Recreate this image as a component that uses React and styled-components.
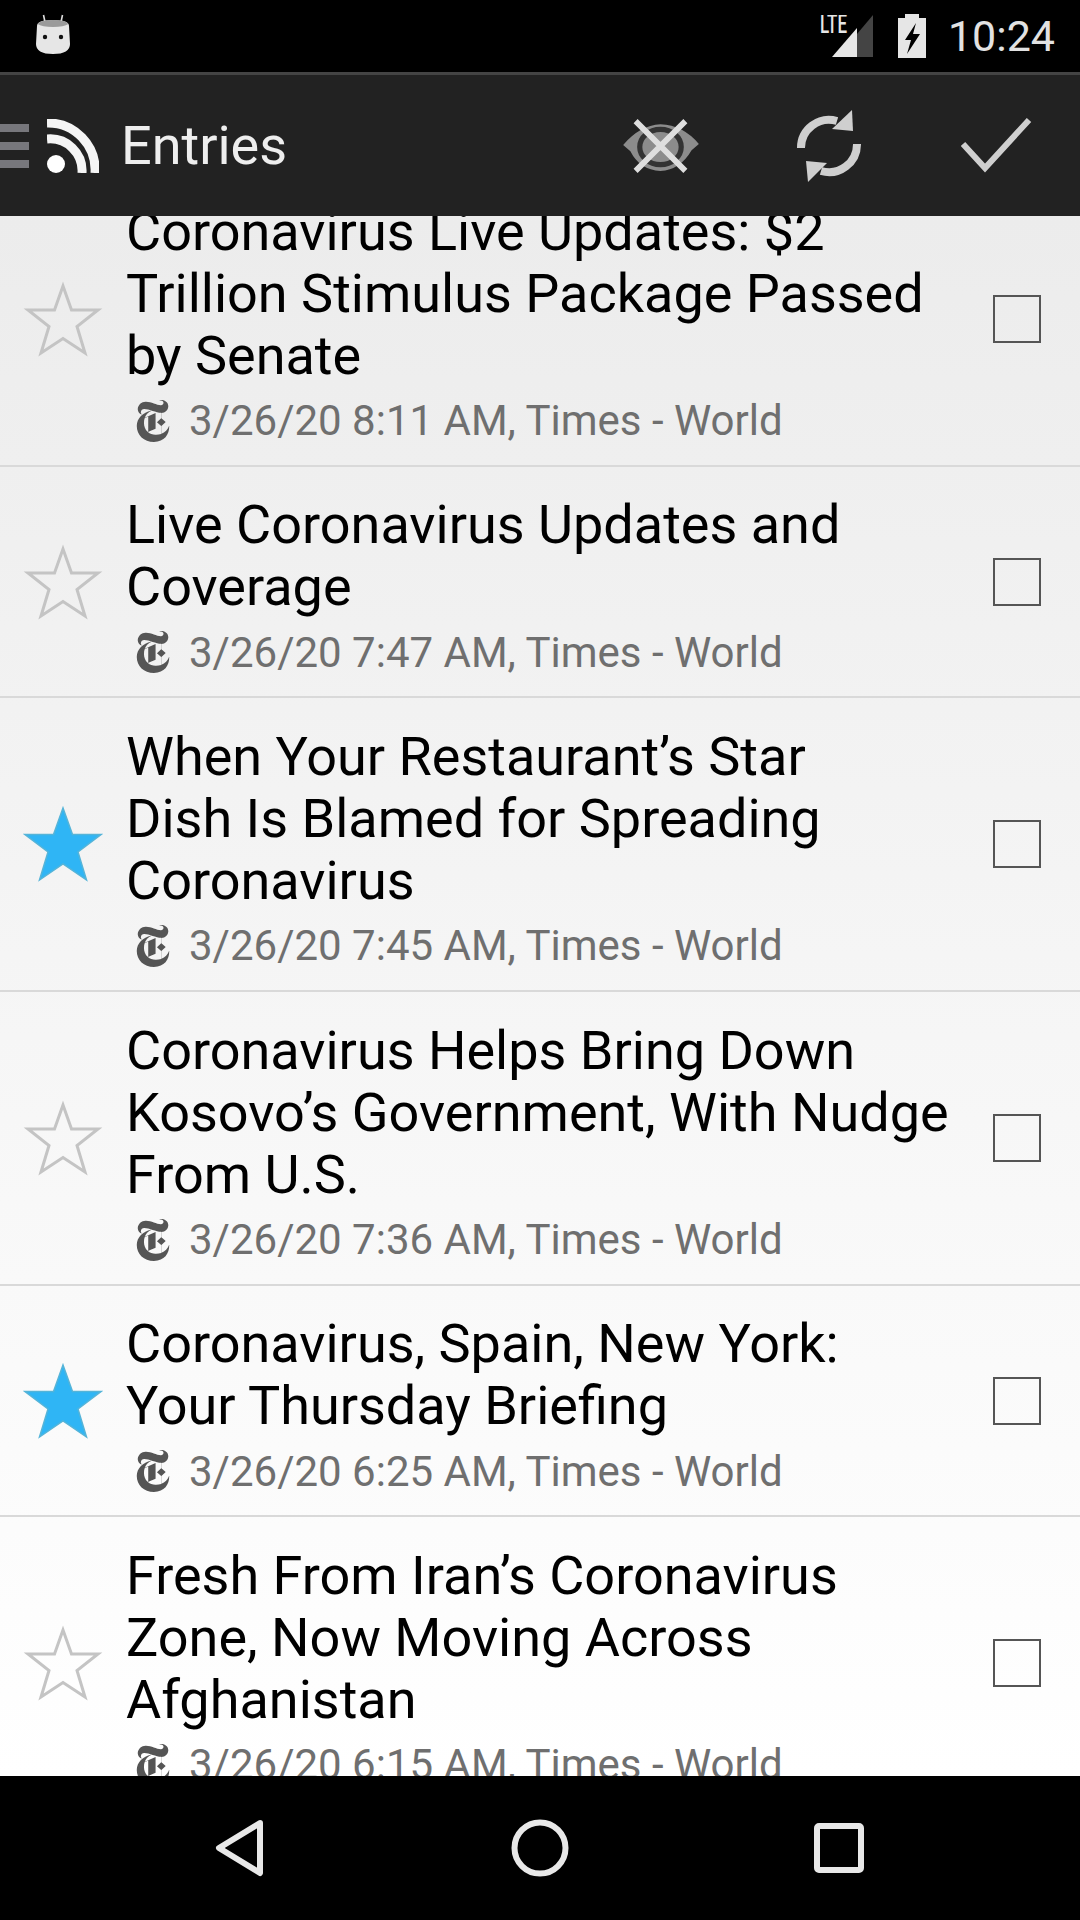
import { createGlobalStyle, styled } from "styled-components";
import { SiNewyorktimes } from "react-icons/si";

const GlobalStyle = createGlobalStyle`
	html, body {
		margin: 0;
		padding: 0;
		background: #000;
	}
`;

const Screen = styled.div`
	display: flex;
	flex-direction: column;
	width: 1080px;
	height: 1920px;
	overflow: hidden;
	font-family: "Roboto", "Liberation Sans", sans-serif;
`;

const StatusBar = styled.div`
	flex: 0 0 72px;
	display: flex;
	align-items: center;
	background: #000;
	padding: 0 25px 0 36px;
`;

const BotIcon = styled.svg`
	display: block;
	margin-bottom: 4px;
`;

const StatusRight = styled.div`
	margin-left: auto;
	display: flex;
	align-items: center;
`;

const BatteryIcon = styled.svg`
	display: block;
	margin-left: 24px;
`;

const Clock = styled.span`
	font-size: 43px;
	color: #e2e2e2;
	margin-left: 22px;
`;

const Toolbar = styled.div`
	flex: 0 0 144px;
	display: flex;
	align-items: center;
	background: #222;
	border-top: 3px solid #444;
	box-sizing: border-box;
`;

const Hamburger = styled.div`
	display: flex;
	flex-direction: column;
	gap: 10px;
	width: 29px;
	margin-right: 18px;
	i {
		display: block;
		height: 8px;
		background: #77777c;
	}
`;

const ToolbarTitle = styled.span`
	font-size: 54px;
	color: #eeeeee;
	margin-left: 22px;
`;

const ToolbarActions = styled.div`
	margin-left: auto;
	display: flex;
	align-items: center;
`;

const ActionIcon = styled.svg`
	display: block;
	margin-right: ${(p) => p.$gap}px;
	color: #cfcfcf;
`;

const List = styled.div`
	flex: 1;
	min-height: 0;
	overflow: hidden;
	background: linear-gradient(180deg, #ececec 0%, #ffffff 100%);
`;

const Rows = styled.div`
	margin-top: -43px;
`;

const Row = styled.div`
	display: flex;
	align-items: center;
	box-sizing: border-box;
	height: ${(p) => p.$height}px;
	border-bottom: 2px solid #d9d9d9;
`;

const StarBox = styled.div`
	flex: 0 0 126px;
	display: flex;
	justify-content: center;
`;

const Body = styled.div`
	flex: 1;
	min-width: 0;
	padding-top: 14px;
`;

const TitleLine = styled.div`
	font-size: 54px;
	line-height: 62px;
	color: #000;
	white-space: nowrap;
`;

const Meta = styled.div`
	display: flex;
	align-items: center;
	height: 62px;
	padding: 3px 0 0 6px;
	font-size: 42px;
	color: #6f6f6f;
	white-space: nowrap;
	svg {
		flex: none;
		margin-right: 15px;
		color: #555;
	}
`;

const CheckBox = styled.div`
	flex: none;
	box-sizing: border-box;
	width: 48px;
	height: 48px;
	margin: 0 39px 0 30px;
	border: 2px solid #555;
`;

const NavBar = styled.div`
	flex: 0 0 144px;
	display: flex;
	align-items: center;
	background: #000;
	padding-left: 215px;
`;

const NavIcon = styled.svg`
	display: block;
	flex: none;
	margin-left: ${(p) => p.$gap || 0}px;
`;

const entries = [
	{
		lines: [
			"Coronavirus Live Updates: $2",
			"Trillion Stimulus Package Passed",
			"by Senate",
		],
		meta: "3/26/20 8:11 AM, Times - World",
	},
	{
		lines: ["Live Coronavirus Updates and", "Coverage"],
		meta: "3/26/20 7:47 AM, Times - World",
	},
	{
		lines: [
			"When Your Restaurant’s Star",
			"Dish Is Blamed for Spreading",
			"Coronavirus",
		],
		meta: "3/26/20 7:45 AM, Times - World",
		starred: true,
	},
	{
		lines: [
			"Coronavirus Helps Bring Down",
			"Kosovo’s Government, With Nudge",
			"From U.S.",
		],
		meta: "3/26/20 7:36 AM, Times - World",
	},
	{
		lines: ["Coronavirus, Spain, New York:", "Your Thursday Briefing"],
		meta: "3/26/20 6:25 AM, Times - World",
		starred: true,
	},
	{
		lines: [
			"Fresh From Iran’s Coronavirus",
			"Zone, Now Moving Across",
			"Afghanistan",
		],
		meta: "3/26/20 6:15 AM, Times - World",
	},
];

function Star({ filled }) {
	return (
		<svg width="80" height="76" viewBox="0 0 80 76">
			{filled ? (
				<polygon
					points="40,2 49.5,28.5 78,28.5 55,46 63.5,74 40,58 16.5,74 25,46 2,28.5 30.5,28.5"
					fill="#2fb5f5"
					stroke="#55b4d8"
					strokeWidth="1.5"
				/>
			) : (
				<polygon
					points="40,5 48.5,29 75,29 54,45.5 62,72 40,57.5 18,72 26,45.5 5,29 31.5,29"
					fill="none"
					stroke="#c4c4c4"
					strokeWidth="3"
				/>
			)}
		</svg>
	);
}

function AndroidBot() {
	return (
		<BotIcon width="34" height="41" viewBox="0 0 34 41">
			<path d="M9 8 L7.5 1 M25 8 L26.5 1" stroke="#ddd" strokeWidth="1.6" />
			<path
				d="M1 12 Q1 6 17 6 Q33 6 33 12 L34 30 Q34 40 17 40 Q0 40 0 30 Z"
				fill="#e6e6e6"
			/>
			<path d="M1.5 10 Q4 6 17 6 Q30 6 32.5 10 Q28 13 17 13 Q6 13 1.5 10 Z" fill="#9a9a9a" />
			<circle cx="9" cy="23" r="2.2" fill="#111" />
			<circle cx="25" cy="23" r="2.2" fill="#111" />
		</BotIcon>
	);
}

function Signal() {
	return (
		<svg width="54" height="43" viewBox="0 0 54 43">
			<text
				x="0"
				y="18"
				fontFamily="Roboto"
				fontSize="25"
				fontWeight="500"
				fill="#e6e6e6"
				textLength="27"
				lengthAdjust="spacingAndGlyphs"
			>
				LTE
			</text>
			<polygon points="37,19 53,0 53,42 37,42" fill="#444" />
			<polygon points="12,42 37,13 37,42" fill="#e6e6e6" />
		</svg>
	);
}

function Battery() {
	return (
		<BatteryIcon width="28" height="44" viewBox="0 0 28 44">
			<path d="M7 0 H21 V4 H28 V44 H0 V4 H7 Z" fill="#e6e6e6" />
			<polygon points="18,9 7,26 13,26 9,40 22,20 15,20" fill="#000" />
		</BatteryIcon>
	);
}

function RssIcon() {
	return (
		<svg width="52" height="54" viewBox="0 0 52 54">
			<circle cx="9" cy="45" r="9" fill="#fff" />
			<path d="M0 20 A 32 32 0 0 1 35 54" fill="none" stroke="#f5f5f5" strokeWidth="9" />
			<path d="M0 4 A 47 47 0 0 1 48 54" fill="none" stroke="#f5f5f5" strokeWidth="9" />
		</svg>
	);
}

function EyeOff() {
	return (
		<ActionIcon $gap={98} width="76" height="56" viewBox="0 0 73 54">
			<path d="M0 26 Q16 7 36 6 Q58 7 73 25 L66 31 Q55 50 36 51 Q16 50 7 32 Z" fill="#8c8c8c" />
			<ellipse cx="36" cy="28" rx="20" ry="17" fill="none" stroke="#333" strokeWidth="5" />
			<path d="M12 3 L60 51 M60 3 L12 51" stroke="#dedede" strokeWidth="5.5" />
		</ActionIcon>
	);
}

function SyncIcon() {
	return (
		<ActionIcon $gap={100} width="64" height="72" viewBox="0 0 64 72">
			<path d="M4 38 A 28 28 0 0 1 40 11" fill="none" stroke="currentColor" strokeWidth="8" />
			<polygon points="55,0 56,21 35,19" fill="currentColor" />
			<path d="M60 34 A 28 28 0 0 1 24 61" fill="none" stroke="currentColor" strokeWidth="8" />
			<polygon points="9,51 11,72 30,53" fill="currentColor" />
		</ActionIcon>
	);
}

function CheckIcon() {
	return (
		<ActionIcon $gap={48} width="71" height="56" viewBox="0 0 71 56">
			<polyline points="2,26 24,50 68,2" fill="none" stroke="currentColor" strokeWidth="6" />
		</ActionIcon>
	);
}

function App() {
	const heights = [294, 231, 294, 294, 231, 294];

	return (
		<Screen>
			<GlobalStyle />
			<StatusBar>
				<AndroidBot />
				<StatusRight>
					<Signal />
					<Battery />
					<Clock>10:24</Clock>
				</StatusRight>
			</StatusBar>
			<Toolbar>
				<Hamburger>
					<i />
					<i />
					<i />
				</Hamburger>
				<RssIcon />
				<ToolbarTitle>Entries</ToolbarTitle>
				<ToolbarActions>
					<EyeOff />
					<SyncIcon />
					<CheckIcon />
				</ToolbarActions>
			</Toolbar>
			<List>
				<Rows>
					{entries.map((entry, i) => (
						<Row key={entry.meta} $height={heights[i]}>
							<StarBox>
								<Star filled={entry.starred} />
							</StarBox>
							<Body>
								{entry.lines.map((line) => (
									<TitleLine key={line}>{line}</TitleLine>
								))}
								<Meta>
									<SiNewyorktimes size={42} />
									{entry.meta}
								</Meta>
							</Body>
							<CheckBox />
						</Row>
					))}
				</Rows>
			</List>
			<NavBar>
				<NavIcon width="50" height="58" viewBox="0 0 50 58">
					<path
						d="M45 4 L4 29 L45 54 Z"
						fill="none"
						stroke="#e8e8e8"
						strokeWidth="6"
						strokeLinejoin="round"
					/>
				</NavIcon>
				<NavIcon $gap={246} width="58" height="58" viewBox="0 0 58 58">
					<circle cx="29" cy="29" r="25.5" fill="none" stroke="#e8e8e8" strokeWidth="6" />
				</NavIcon>
				<NavIcon $gap={245} width="50" height="50" viewBox="0 0 50 50">
					<rect x="3" y="3" width="44" height="44" rx="2" fill="none" stroke="#e8e8e8" strokeWidth="6" />
				</NavIcon>
			</NavBar>
		</Screen>
	);
}

export default App;
